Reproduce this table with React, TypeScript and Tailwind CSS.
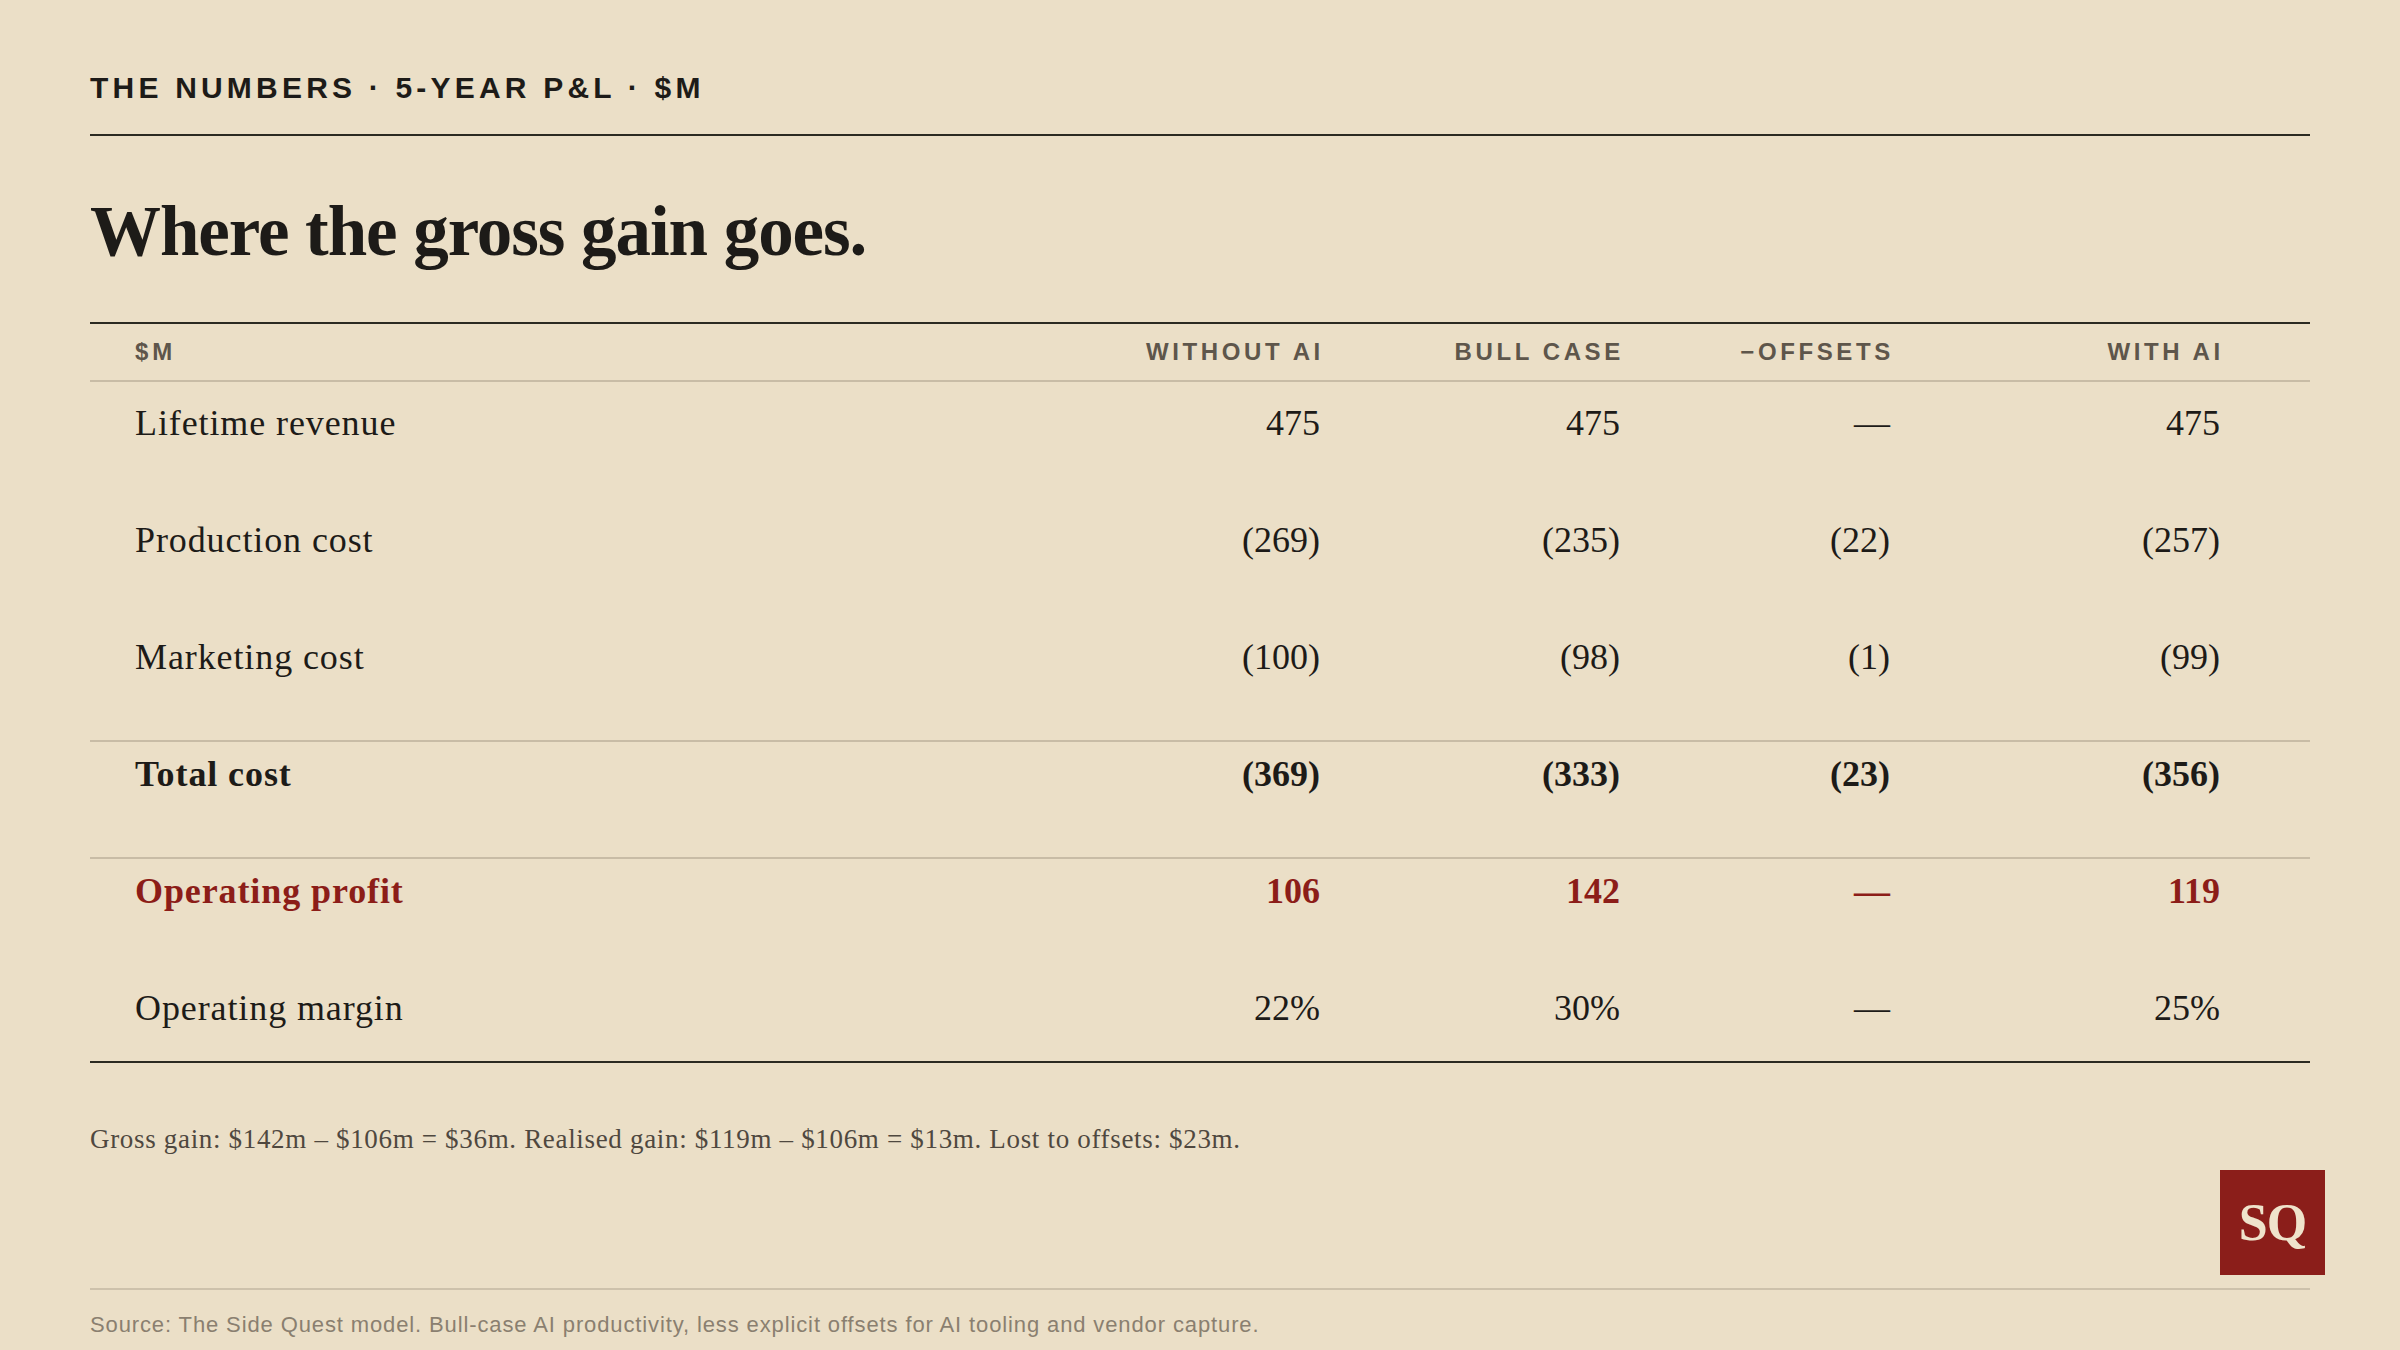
import React from "react"

type Row = {
  label: string
  values: string[]
  tone?: "total" | "profit"
  ruled?: boolean
  last?: boolean
}

const columns = ["WITHOUT AI", "BULL CASE", "\u2212OFFSETS", "WITH AI"]

const rows: Row[] = [
  { label: "Lifetime revenue", values: ["475", "475", "—", "475"] },
  { label: "Production cost", values: ["(269)", "(235)", "(22)", "(257)"] },
  { label: "Marketing cost", values: ["(100)", "(98)", "(1)", "(99)"] },
  { label: "Total cost", values: ["(369)", "(333)", "(23)", "(356)"], tone: "total", ruled: true },
  { label: "Operating profit", values: ["106", "142", "—", "119"], tone: "profit", ruled: true },
  { label: "Operating margin", values: ["22%", "30%", "—", "25%"], last: true },
]

const serif = "font-['Liberation_Serif','Times_New_Roman',serif]"
const sans = "font-['Liberation_Sans',Arial,sans-serif]"

function TableRow({ row }: { row: Row }) {
  const color =
    row.tone === "profit" ? "text-[#8c1d18]" : "text-[#1d1b18]"
  const weight = row.tone ? "font-bold" : "font-normal"
  return (
    <div
      className={`grid grid-cols-[1fr_300px_300px_270px_330px_90px] items-start border-t-2 pt-[14px] ${
        row.ruled ? "border-[#c8bca6]" : "border-transparent"
      } ${row.last ? "h-[87px]" : "h-[117px]"}`}
    >
      <div
        className={`pl-[45px] text-[36px] leading-[36px] tracking-[0.025em] ${serif} ${color} ${weight}`}
      >
        {row.label}
      </div>
      {row.values.map((v, i) => (
        <div
          key={i}
          className={`text-right text-[36px] leading-[36px] ${serif} ${color} ${weight}`}
        >
          {v}
        </div>
      ))}
      <div />
    </div>
  )
}

export default function App() {
  return (
    <div className="relative h-[1350px] w-[2400px] overflow-hidden bg-[#ebdfc7] px-[90px]">
      <div
        className={`pt-[73px] text-[30px] leading-[30px] font-bold tracking-[0.14em] text-[#1d1b18] ${sans}`}
      >
        THE NUMBERS · 5-YEAR P&amp;L · $M
      </div>
      <div className="mt-[31px] h-[2px] bg-[#2b2a22]" />

      <h1
        className={`mt-[60px] text-[71px] leading-[71px] font-bold tracking-[-0.015em] text-[#1d1b18] ${serif}`}
      >
        Where the gross gain goes.
      </h1>

      <div className="mt-[55px] h-[2px] bg-[#2b2a22]" />
      <div className="grid h-[58px] grid-cols-[1fr_300px_300px_270px_330px_90px] items-center border-b-2 border-[#c8bca6]">
        <div
          className={`pl-[45px] text-[24px] leading-[24px] font-bold tracking-[0.16em] text-[#5e564b] ${sans}`}
        >
          $M
        </div>
        {columns.map((c) => (
          <div
            key={c}
            className={`mr-[-0.16em] text-right text-[24px] leading-[24px] font-bold tracking-[0.15em] text-[#5e564b] ${sans}`}
          >
            {c}
          </div>
        ))}
        <div />
      </div>

      <div className="mt-[7px]">
        {rows.map((r) => (
          <TableRow key={r.label} row={r} />
        ))}
      </div>
      <div className="h-[2px] bg-[#2b2a22]" />

      <p
        className={`mt-[63px] text-[27px] leading-[27px] tracking-[0.025em] text-[#4f483f] ${serif}`}
      >
        Gross gain: $142m – $106m = $36m. Realised gain: $119m – $106m = $13m. Lost to offsets: $23m.
      </p>

      <div className="mt-[135px] h-[2px] bg-[#cdc1ab]" />
      <p
        className={`mt-[24px] text-[22px] leading-[22px] tracking-[0.04em] text-[#8a7f70] ${sans}`}
      >
        Source: The Side Quest model. Bull-case AI productivity, less explicit offsets for AI tooling and vendor capture.
      </p>

      <div className="absolute right-[75px] top-[1170px] flex h-[105px] w-[105px] items-center justify-center bg-[#8b1e1a]">
        <span
          className={`text-[52px] leading-none font-bold tracking-[-0.02em] text-[#efe3cb] ${serif}`}
        >
          SQ
        </span>
      </div>
    </div>
  )
}
